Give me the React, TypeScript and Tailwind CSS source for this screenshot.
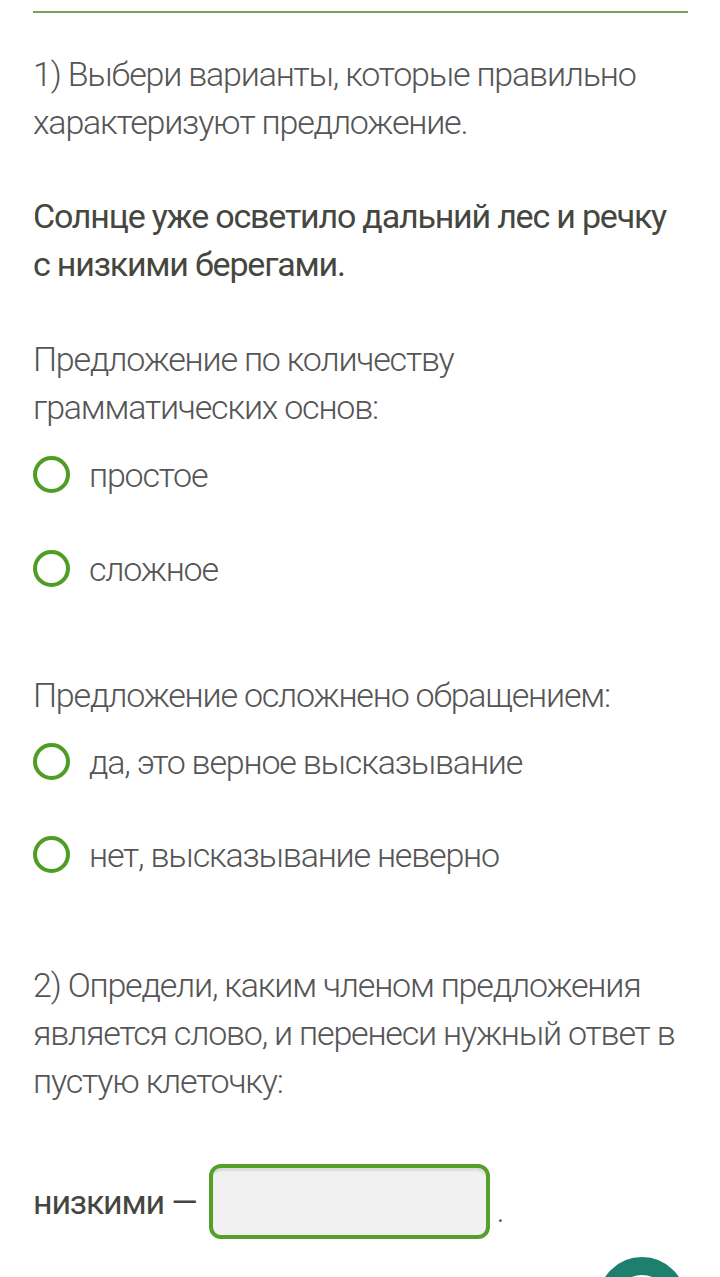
import React from "react";

const Radio = ({ label }: { label: string }) => (
  <div className="flex items-center h-[47px]">
    <span className="w-[37px] h-[37px] rounded-full border-[4px] border-[#4f9d25] shrink-0" />
    <span className="ml-[19px]">{label}</span>
  </div>
);

export default function App() {
  return (
    <div
      className="relative w-[720px] h-[1277px] overflow-hidden bg-white text-[#555555] text-[34px] leading-[48px] font-light tracking-[-1.2px] whitespace-nowrap"
      style={{ fontFamily: "Roboto, 'Noto Sans', sans-serif" }}
    >
      <div className="px-[33px] pt-[11px]">
        <div className="h-[2px] bg-[#76a05e] mr-[-1px]" />

        <p className="mt-[37px]">
          1) Выбери варианты, которые правильно
          <br />
          характеризуют предложение.
        </p>

        <p className="mt-[46px] font-normal text-[#45473f]">
          Солнце уже осветило дальний лес и речку
          <br />с низкими берегами.
        </p>

        <p className="mt-[47px]">
          Предложение по количеству
          <br />
          грамматических основ:
        </p>
        <div className="mt-[20px] flex flex-col gap-[47px]">
          <Radio label="простое" />
          <Radio label="сложное" />
        </div>

        <p className="mt-[79px]">Предложение осложнено обращением:</p>
        <div className="mt-[19px] flex flex-col gap-[46px]">
          <Radio label="да, это верное высказывание" />
          <Radio label="нет, высказывание неверно" />
        </div>

        <p className="mt-[83px]">
          2) Определи, каким членом предложения
          <br />
          является слово, и перенеси нужный ответ в
          <br />
          пустую клеточку:
        </p>

        <div className="mt-[59px] flex items-center">
          <span className="font-normal text-[#45473f]">низкими —</span>
          <span className="ml-[12px] w-[281px] h-[75px] rounded-[12px] border-[4px] border-[#54a028] bg-[#f1f1f1] shadow-[inset_0_4px_2px_-1px_#dcdcdc]" />
          <span className="ml-[7px] mt-[16px]">.</span>
        </div>
      </div>

      <div className="absolute left-[598px] top-[1257px] w-[88px] h-[88px] rounded-full border-[18px] border-[#1d7f6e] bg-white" />
    </div>
  );
}
